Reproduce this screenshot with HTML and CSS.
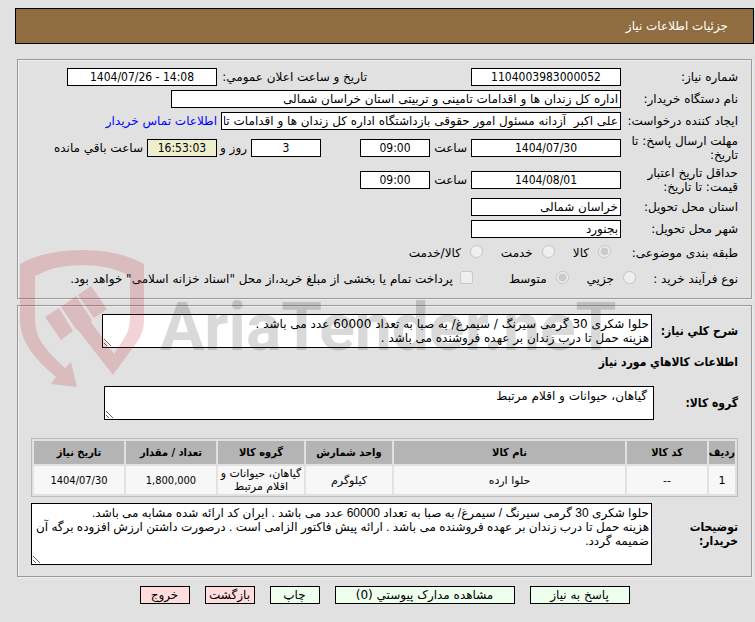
FILE: index.html
```html
<!DOCTYPE html>
<html lang="fa" dir="rtl">
<head>
  <meta charset="UTF-8">
  <meta name="viewport" content="width=device-width, initial-scale=1.0">
  <title>جزئیات اطلاعات نیاز</title>
  <link rel="stylesheet" href="styles.css">
</head>
<body>

<header class="page-title">جزئیات اطلاعات نیاز</header>

<main class="content">
  <section class="panel info">
    <div class="row">
      <label class="caption" for="needNo">شماره نیاز:</label>
      <input class="box medium center" id="needNo" value="1104003983000052" readonly>
      <label class="announce" for="announceDate">تاریخ و ساعت اعلان عمومي:</label>
      <input class="box medium center" id="announceDate" dir="ltr" value="1404/07/26 - 14:08" readonly>
    </div>
    <div class="row">
      <label class="caption" for="buyerOrg">نام دستگاه خریدار:</label>
      <input class="box long" id="buyerOrg" value="اداره کل زندان ها و اقدامات تامینی و تربیتی استان خراسان شمالی" readonly>
    </div>
    <div class="row">
      <label class="caption" for="creator">ایجاد کننده درخواست:</label>
      <input class="box wide" id="creator" value="علی اکبر  آزدانه مسئول امور حقوقی بازداشتگاه اداره کل زندان ها و اقدامات تامینی و تربیتی استان خراسان شمالی" readonly>
      <a class="contact" href="#">اطلاعات تماس خریدار</a>
    </div>
    <div class="row tall">
      <label class="caption" for="deadline">مهلت ارسال پاسخ: تا تاریخ:</label>
      <input class="box medium center" id="deadline" value="1404/07/30" readonly>
      <label class="unit" for="deadlineHour">ساعت</label>
      <input class="box small center" id="deadlineHour" value="09:00" readonly>
      <input class="box small center days" id="daysLeft" value="3" readonly>
      <label class="unit day-unit" for="daysLeft">روز و</label>
      <input class="box small center timer" id="timeLeft" value="16:53:03" readonly>
      <label for="timeLeft">ساعت باقي مانده</label>
    </div>
    <div class="row tall">
      <label class="caption" for="validity">حداقل تاریخ اعتبار قیمت: تا تاریخ:</label>
      <input class="box medium center" id="validity" value="1404/08/01" readonly>
      <label class="unit" for="validityHour">ساعت</label>
      <input class="box small center" id="validityHour" value="09:00" readonly>
    </div>
    <div class="row">
      <label class="caption" for="province">استان محل تحویل:</label>
      <input class="box medium" id="province" value="خراسان شمالی" readonly>
    </div>
    <div class="row">
      <label class="caption" for="city">شهر محل تحویل:</label>
      <input class="box medium" id="city" value="بجنورد" readonly>
    </div>
    <div class="row options">
      <span class="caption subject">طبقه بندی موضوعی:</span>
      <div class="choices">
        <label><input type="radio" name="subject" checked disabled>کالا</label>
        <label><input type="radio" name="subject" disabled>خدمت</label>
        <label><input type="radio" name="subject" disabled>کالا/خدمت</label>
      </div>
    </div>
    <div class="row options">
      <span class="caption process">نوع فرآیند خرید :</span>
      <div class="choices">
        <label><input type="radio" name="process" disabled>جزیي</label>
        <label><input type="radio" name="process" checked disabled>متوسط</label>
        <label class="treasury"><input type="checkbox" disabled>پرداخت تمام یا بخشی از مبلغ خرید،از محل "اسناد خزانه اسلامی" خواهد بود.</label>
      </div>
    </div>
  </section>

  <section class="panel goods">
    <div class="area-row">
      <label class="heading" for="summary">شرح کلي نیاز:</label>
      <textarea class="area" id="summary" rows="2" readonly>حلوا شکری 30 گرمی سیرنگ / سیمرغ/ به صبا به تعداد 60000 عدد می باشد .
هزینه حمل تا درب زندان بر عهده فروشنده می باشد .</textarea>
    </div>
    <h2 class="heading">اطلاعات کالاهاي مورد نیاز</h2>
    <div class="area-row">
      <label class="heading group-label" for="group">گروه کالا:</label>
      <textarea class="area group" id="group" rows="2" readonly>گیاهان، حیوانات و اقلام مرتبط</textarea>
    </div>
    <table class="items">
      <thead>
        <tr>
          <th class="col-row">ردیف</th>
          <th class="col-code">کد کالا</th>
          <th>نام کالا</th>
          <th class="col-mid">واحد شمارش</th>
          <th class="col-mid">گروه کالا</th>
          <th class="col-end">تعداد / مقدار</th>
          <th class="col-end">تاریخ نیاز</th>
        </tr>
      </thead>
      <tbody>
        <tr>
          <td>1</td>
          <td>--</td>
          <td>حلوا ارده</td>
          <td>کیلوگرم</td>
          <td>گیاهان، حیوانات و اقلام مرتبط</td>
          <td class="number">1,800,000</td>
          <td class="number">1404/07/30</td>
        </tr>
      </tbody>
    </table>
    <div class="area-row">
      <label class="heading" for="notes">توضیحات خریدار:</label>
      <textarea class="area notes" id="notes" rows="4" readonly>حلوا شکری 30 گرمی سیرنگ / سیمرغ/ به صبا به تعداد 60000 عدد می باشد . ایران کد ارائه شده مشابه می باشد.
هزینه حمل تا درب زندان بر عهده فروشنده می باشد . ارائه پیش فاکتور الزامی است . درصورت داشتن ارزش افزوده برگه آن ضمیمه گردد.</textarea>
    </div>
  </section>

  <div class="watermark" dir="ltr" aria-hidden="true">
    <svg class="shield" width="126" height="140" viewBox="0 0 126 140">
      <path d="M0 15 Q25 1 62 1 T124 15 V71 Q124 83 117 93 L93 126 L58 81 L56 80 L41 58 L56 47 L72 71 L71 73 L94 105 L105 88 Q110 80 110 68 V27 Q90 16 62 16 T15 27 V69 Q15 82 20 91 Q28 104 45 119 L51 113 L57 138 L31 135 L36 128 Q18 113 10 101 Q0 86 0 71 Z"/>
      <path d="M25 68 L39 59 L53 82 L41 91 Z"/>
      <path d="M58 46 L71 37 L87 60 L74 69 Z"/>
    </svg>
    <span class="brand">AriaTender.neT</span>
  </div>
</main>

<div class="actions">
  <button class="button" type="button">پاسخ به نیاز</button>
  <button class="button docs" type="button">مشاهده مدارک پیوستي (0)</button>
  <button class="button short" type="button">چاپ</button>
  <button class="button short back" type="button">بازگشت</button>
  <button class="button short back" type="button">خروج</button>
</div>

</body>
</html>
```
FILE: styles.css
```css
* {
  box-sizing: border-box;
}
body {
  margin: 8px 1px 16px 15px;
  background-color: #e1e1e1;
  color: #000;
  font-family: "DejaVu Sans", sans-serif;
  font-size: 12px;
  line-height: 14px;
}
input, textarea, button {
  font: inherit;
  color: inherit;
}
.page-title {
  padding: 10px 25px;
  border: 1px solid #000;
  background-color: #8f6d40;
  color: #fff;
}
.content {
  position: relative;
  margin: 15px 2px 0;
}
.panel {
  border: 1px solid #9a9a9a;
  box-shadow: 1px 1px 0 #eee, inset 1px 1px 0 #eee;
  padding: 6px 13px;
}
.row {
  display: flex;
  align-items: center;
  gap: 4px;
  min-height: 22px;
}
.row.tall {
  min-height: 32px;
}
.row.options {
  min-height: 26px;
}
.caption {
  flex: none;
  width: 113px;
}
.caption.subject {
  width: 123px;
}
.caption.process {
  width: 98px;
}
.box {
  flex: none;
  height: 18px;
  padding: 0 2px;
  border: 1px solid #000;
  border-radius: 0;
  background-color: #fff;
}
.medium { width: 150px; }
.long { width: 450px; }
.wide { width: 400px; }
.small { width: 70px; }
.center {
  font-family: "DejaVu Sans Condensed", "DejaVu Sans", sans-serif;
  text-align: center;
}
.announce {
  width: 146px;
  margin-right: 100px;
  white-space: nowrap;
}
.contact {
  color: #00f;
  text-decoration: none;
}
.unit {
  width: 33px;
  white-space: nowrap;
}
.unit.day-unit {
  width: 26px;
}
.days {
  margin-right: 35px;
}
.timer {
  background-color: #eeeecc;
}
.choices {
  display: flex;
  gap: 18px;
}
.choices label {
  display: flex;
  align-items: center;
  gap: 9px;
  white-space: nowrap;
}
.choices input {
  width: 13px;
  height: 13px;
  margin: 0 0 4px;
}
.choices .treasury {
  gap: 7px;
  margin-right: 18px;
}
.goods {
  margin-top: 6px;
  padding: 8px 13px 11px;
}
.area-row {
  display: flex;
  align-items: center;
}
.heading {
  flex: none;
  width: 86px;
  margin: 0;
  font-family: "DejaVu Sans Condensed", "DejaVu Sans", sans-serif;
  font-size: 12px;
  font-weight: bold;
}
.heading.group-label {
  width: 84px;
}
h2.heading {
  width: auto;
  padding: 7px 0 17px;
}
.area {
  display: block;
  width: 550px;
  height: 34px;
  padding: 2px;
  border: 1px solid #000;
  background-color: #fff;
  overflow: hidden;
}
.area.group {
  padding: 2px 6px;
}
.area.notes {
  flex: 1;
  height: 62px;
  font-family: "Liberation Sans", "DejaVu Sans", sans-serif;
}
.items {
  width: 100%;
  margin: 18px 0 6px;
  border: 1px solid #bbb;
  border-spacing: 2px;
  table-layout: fixed;
  font-size: 11px;
  line-height: 13px;
  text-align: center;
}
.items th {
  height: 23px;
  padding: 0;
  background-color: #b4b4b4;
  font-family: "DejaVu Sans Condensed", "DejaVu Sans", sans-serif;
}
.items td {
  height: 28px;
  padding: 1px;
  background-color: #f7f7f7;
}
.items .number {
  font-family: "DejaVu Sans Condensed", "DejaVu Sans", sans-serif;
}
.col-row { width: 26px; }
.col-code { width: 80px; }
.col-mid { width: 86px; }
.col-end { width: 90px; }
.watermark {
  position: absolute;
  top: 190px;
  left: 3px;
  display: flex;
  pointer-events: none;
}
.shield {
  fill: rgba(190, 40, 50, 0.2);
}
.brand {
  margin-left: 14px;
  color: rgba(0, 0, 0, 0.15);
  font-family: Roboto, sans-serif;
  font-size: 66px;
  font-weight: bold;
  line-height: 158px;
}
.actions {
  display: flex;
  justify-content: center;
  gap: 15px;
  margin-top: 9px;
}
.button {
  width: 100px;
  height: 18px;
  padding: 0;
  border: 1px solid #000;
  background-color: #eeffee;
  white-space: nowrap;
}
.docs { width: 180px; }
.short { width: 50px; }
.back { background-color: #ffdddd; }
```
